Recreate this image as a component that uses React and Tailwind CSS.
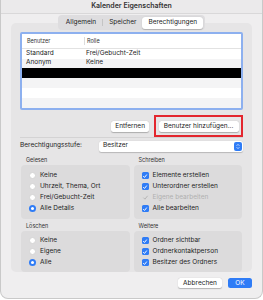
import { useState } from "react";

const FONT = { fontFamily: "Inter, 'Liberation Sans', sans-serif" };

function Radio({ label, checked }) {
  return (
    <div className="flex h-[11px] items-center gap-[4px]">
      {checked ? (
        <span className="flex h-[7px] w-[7px] items-center justify-center rounded-full bg-[#2f7cf6]">
          <span className="h-[3px] w-[3px] rounded-full bg-white" />
        </span>
      ) : (
        <span className="h-[7px] w-[7px] rounded-full border border-[#d4d4d4] bg-white" />
      )}
      <span className="text-[6.5px] text-[#222]">{label}</span>
    </div>
  );
}

function Check({ label, disabled }) {
  return (
    <div className="flex h-[11px] items-center gap-[4px]">
      {disabled ? (
        <span className="flex h-[7px] w-[7px] items-center justify-center">
          <svg viewBox="0 0 10 10" className="h-[7px] w-[7px]">
            <path d="M2 5.2 L4.2 7.4 L8 2.6" fill="none" stroke="#b5b5b5" strokeWidth="1.4" />
          </svg>
        </span>
      ) : (
        <span className="flex h-[7px] w-[7px] items-center justify-center rounded-[1.5px] bg-[#2f7cf6]">
          <svg viewBox="0 0 10 10" className="h-[6px] w-[6px]">
            <path d="M2 5.2 L4.2 7.4 L8 2.6" fill="none" stroke="white" strokeWidth="1.6" />
          </svg>
        </span>
      )}
      <span className={`text-[6.5px] ${disabled ? "text-[#b0b0b0]" : "text-[#222]"}`}>{label}</span>
    </div>
  );
}

function Section({ title, children, tight }) {
  return (
    <div className="flex flex-1 flex-col">
      <div className="h-[8px] pl-[5px] text-[5.5px] leading-[8px] text-[#333]">{title}</div>
      <div
        className={`mt-[1px] flex flex-col rounded-[4px] bg-[#dcdbdc] px-[8px] ${
          tight ? "py-[4px]" : "py-[5px]"
        }`}
      >
        {children}
      </div>
    </div>
  );
}

const ROWS = [
  { user: "Standard", role: "Frei/Gebucht-Zeit", cls: "bg-white h-[9.5px]" },
  { user: "Anonym", role: "Keine", cls: "bg-[#f4f4f5] h-[9.5px]" },
  { user: "", role: "", cls: "bg-black h-[10px]" },
  { user: "", role: "", cls: "bg-[#f4f4f5] h-[10px]" },
  { user: "", role: "", cls: "bg-white h-[10px]" },
  { user: "", role: "", cls: "bg-[#f4f4f5] h-[10px]" },
  { user: "", role: "", cls: "bg-white h-[10px]" },
];

export default function App() {
  const [tab] = useState("Berechtigungen");

  return (
    <div className="h-[300px] w-[263px] bg-white" style={FONT}>
      <div className="flex h-[299px] w-[263px] flex-col overflow-hidden rounded-b-[8px] border border-t-0 border-[#c9c9c9] bg-[#efeeef]">
        {/* Title bar */}
        <div className="flex h-[14px] shrink-0 items-center justify-center border-b border-[#d9d8d9] bg-[#ebeaeb] text-[7px] font-semibold text-[#333]">
          Kalender Eigenschaften
        </div>

        {/* Tabs */}
        <div className="relative z-10 mt-[1px] flex justify-center">
          <div className="flex h-[15px] items-center rounded-[4px] bg-[#dedddf] p-[1.5px] text-[6.5px] text-[#222]">
            {["Allgemein", "Speicher", "Berechtigungen"].map((t, i) => (
              <div key={t} className="flex h-full items-center">
                {i === 1 && <span className="h-[7px] w-px bg-[#c4c4c4]" />}
                <span
                  className={`flex h-full items-center px-[6px] ${
                    t === tab ? "rounded-[3px] bg-white shadow-[0_0.5px_1px_rgba(0,0,0,0.2)]" : ""
                  }`}
                >
                  {t}
                </span>
              </div>
            ))}
          </div>
        </div>

        {/* Group box */}
        <div className="-mt-[7px] ml-[10px] flex h-[249px] w-[241px] flex-col rounded-[5px] bg-[#e6e5e6] px-[9px] pt-[9px]">
          {/* Table */}
          <div className="h-[81px] overflow-hidden rounded-[2px] border-2 border-[#8db0ef] bg-white">
            <div className="flex h-[15px] items-center border-b border-[#e2e2e2] text-[5.5px] text-[#333]">
              <span className="w-[62px] pl-[5px]">Benutzer</span>
              <span className="h-[8px] w-px bg-[#dcdcdc]" />
              <span className="pl-[2px]">Rolle</span>
            </div>
            {ROWS.map((r, i) => (
              <div key={i} className={`flex items-center text-[6.5px] text-[#222] ${r.cls}`}>
                <span className="w-[61px] pl-[4px]">{r.user}</span>
                <span className="pl-[3px]">{r.role}</span>
              </div>
            ))}
          </div>

          {/* Buttons */}
          <div className="mt-[5px] flex items-center justify-end gap-[5px]">
            <button className="h-[11px] rounded-[2.5px] bg-white px-[4px] text-[6.5px] leading-[11px] text-[#222] shadow-[0_0.5px_1px_rgba(0,0,0,0.25)]">
              Entfernen
            </button>
            <div className="flex h-[22px] w-[89px] items-center justify-center border-2 border-[#e3262e]">
              <button className="h-[11px] w-[80px] rounded-[2.5px] bg-white text-[6.5px] leading-[11px] text-[#222] shadow-[0_0.5px_1px_rgba(0,0,0,0.25)]">
                Benutzer hinzufügen...
              </button>
            </div>
          </div>

          <div className="h-px bg-[#d4d3d4]" />

          {/* Permission level */}
          <div className="mt-[2px] flex h-[12px] items-center">
            <span className="w-[79px] text-[6.5px] text-[#222]">Berechtigungsstufe:</span>
            <div className="flex h-[11px] flex-1 items-center justify-between rounded-[2.5px] bg-white pl-[4px] pr-[1px] shadow-[0_0.5px_1px_rgba(0,0,0,0.2)]">
              <span className="text-[6.5px] text-[#222]">Besitzer</span>
              <span className="flex h-[9px] w-[8px] items-center justify-center rounded-[2px] bg-[#2f7cf6]">
                <svg viewBox="0 0 8 10" className="h-[7px] w-[6px]">
                  <path d="M2 4 L4 2 L6 4 M2 6 L4 8 L6 6" fill="none" stroke="white" strokeWidth="1" />
                </svg>
              </span>
            </div>
          </div>

          {/* Gelesen / Schreiben */}
          <div className="mt-[4px] flex gap-[4px] px-[1px]">
            <Section title="Gelesen">
              <Radio label="Keine" />
              <Radio label="Uhrzeit, Thema, Ort" />
              <Radio label="Frei/Gebucht-Zeit" />
              <Radio label="Alle Details" checked />
            </Section>
            <Section title="Schreiben">
              <Check label="Elemente erstellen" />
              <Check label="Unterordner erstellen" />
              <Check label="Eigene bearbeiten" disabled />
              <Check label="Alle bearbeiten" />
            </Section>
          </div>

          {/* Löschen / Weitere */}
          <div className="mt-[3px] flex gap-[4px] px-[1px]">
            <Section title="Löschen" tight>
              <Radio label="Keine" />
              <Radio label="Eigene" />
              <Radio label="Alle" checked />
            </Section>
            <Section title="Weitere" tight>
              <Check label="Ordner sichtbar" />
              <Check label="Ordnerkontaktperson" />
              <Check label="Besitzer des Ordners" />
            </Section>
          </div>
        </div>

        {/* Footer */}
        <div className="mt-[6px] flex justify-end gap-[6px] pr-[10px]">
          <button className="h-[10px] w-[44px] rounded-[2.5px] bg-white text-[6.5px] leading-[10px] text-[#222] shadow-[0_0.5px_1px_rgba(0,0,0,0.25)]">
            Abbrechen
          </button>
          <button className="h-[10px] w-[24px] rounded-[2.5px] bg-[#2f7cf6] text-[6.5px] leading-[10px] text-white">
            OK
          </button>
        </div>
      </div>
    </div>
  );
}
